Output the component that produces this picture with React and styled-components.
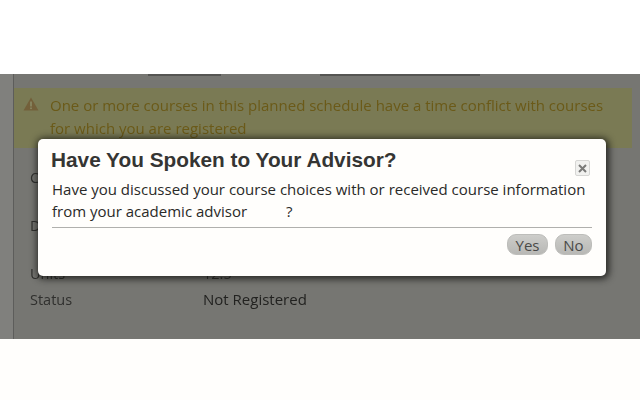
import React from "react";
import styled, { createGlobalStyle } from "styled-components";

const Global = createGlobalStyle`
  html, body { margin: 0; padding: 0; background: #fffefc; }
  body { width: 640px; height: 400px; overflow: hidden; font-family: "Open Sans", "Noto Sans", sans-serif; }
`;
const Page = styled.div`
  width: 640px; height: 400px; display: flex; flex-direction: column; background: #fffefc; position: relative;
`;
const TopBand = styled.div`height: 74px; background: #fff; flex: none;`;
const Shade = styled.div`
  height: 265px; flex: none; background: #767672; display: flex; overflow: hidden;
`;
const Gutter = styled.div`
  width: 13px; flex: none; background: #80807d; border-right: 1px solid #5d5d5b;
`;
const Main = styled.div`flex: 1; min-width: 0; display: flex; flex-direction: column;`;
const TabRow = styled.div`display: flex; height: 14px; padding-left: 134px; gap: 99px; flex: none;`;
const TabLine = styled.div`
  height: 2px; width: ${p => p.$w}px; background: #555553;
`;
const Alert = styled.div`
  margin-right: 8px; height: 60px; flex: none; background: #7a7a54;
  display: flex; padding: 6px 0 0 9px; gap: 11px; box-sizing: border-box;
`;
const AlertText = styled.div`
  font-size: 15px; line-height: 22.5px; color: #6b5a18; white-space: nowrap; filter: blur(.3px);
`;
const Warn = styled.svg`width: 16px; height: 14px; margin-top: 3px; flex: none; filter: blur(.4px);`;
const Rows = styled.div`
  display: grid; grid-template-columns: 173px 1fr; padding: 20px 0 0 16px; grid-auto-rows: 48px;
  font-size: 14.5px; color: #30302e;
`;
const Cell = styled.div`
  line-height: 20px; color: ${p => p.$strong ? "#222220" : "#30302e"}; font-weight: ${p => p.$strong ? 500 : 400};
  font-size: ${p => p.$strong ? 15 : 14.5}px; filter: blur(.25px);
`;
const Shadowed = styled.div`margin-top: ${p => p.$t}px;`;
const Modal = styled.div`
  position: absolute; left: 38px; top: 139px; width: 568px; height: 137px; box-sizing: border-box;
  background: #fffefc; border-radius: 5px; box-shadow: 1px 1px 7px 2px rgba(20,20,18,.8);
  padding: 9px 14px 0 13px; display: flex; flex-direction: column;
`;
const Head = styled.div`display: flex; justify-content: space-between; align-items: flex-start; height: 31px;`;
const Title = styled.h2`
  margin: 0; font: bold 20.8px/24px "Liberation Sans", Arial, sans-serif; color: #353533;
`;
const Close = styled.button`
  width: 15px; height: 16px; margin: 12px 2px 0 0; padding: 0; border: 1px solid #d6d6d4; border-radius: 2px;
  background: #f1f1ef; display: flex; align-items: center; justify-content: center;
`;
const Body = styled.p`
  margin: 0 0 0 1px; font-size: 15px; line-height: 21.5px; color: #2a2a28; white-space: nowrap; height: 48px;
`;
const Rule = styled.div`height: 1px; background: #b0b0ad; margin-left: 1px;`;
const Actions = styled.div`display: flex; justify-content: flex-end; gap: 7px; margin-top: 6px;`;
const Btn = styled.button`
  height: 21px; width: ${p => p.$w}px; padding: 0; border: 1px solid #bdbdba; border-radius: 9px;
  background: linear-gradient(#cdcdca, #b8b8b5); color: #4a4a48;
  font: 15px/18px "Open Sans", sans-serif;
`;

export default function App() {
  return (
    <Page>
      <Global />
      <TopBand />
      <Shade>
        <Gutter />
        <Main>
          <TabRow><TabLine $w={73} /><TabLine $w={160} /></TabRow>
          <Alert>
            <Warn viewBox="0 0 16 14">
              <path d="M8 0.5 L15.5 13.5 H0.5 Z" fill="#73603a" />
              <rect x="7.2" y="4.5" width="1.6" height="5" fill="#8a8a66" />
              <rect x="7.2" y="10.5" width="1.6" height="1.6" fill="#8a8a66" />
            </Warn>
            <AlertText>
              One or more courses in this planned schedule have a time conflict with courses<br />
              for which you are registered
            </AlertText>
          </Alert>
          <Rows>
            <Cell>Course</Cell><Cell />
            <Cell>Days</Cell><Cell />
            <Cell>Units</Cell><Cell>12.5</Cell>
            <Shadowed $t={-22}><Cell>Status</Cell></Shadowed>
            <Shadowed $t={-23}><Cell $strong>Not Registered</Cell></Shadowed>
          </Rows>
        </Main>
      </Shade>
      <Modal>
        <Head>
          <Title>Have You Spoken to Your Advisor?</Title>
          <Close aria-label="Close">
            <svg width="9" height="9" viewBox="0 0 9 9">
              <path d="M1 1 L8 8 M8 1 L1 8" stroke="#7a7a78" strokeWidth="2" />
            </svg>
          </Close>
        </Head>
        <Body>
          Have you discussed your course choices with or received course information<br />
          from your academic advisor &nbsp; &nbsp; &nbsp; &nbsp; &nbsp;?
        </Body>
        <Rule />
        <Actions>
          <Btn $w={41}>Yes</Btn>
          <Btn $w={37}>No</Btn>
        </Actions>
      </Modal>
    </Page>
  );
}
